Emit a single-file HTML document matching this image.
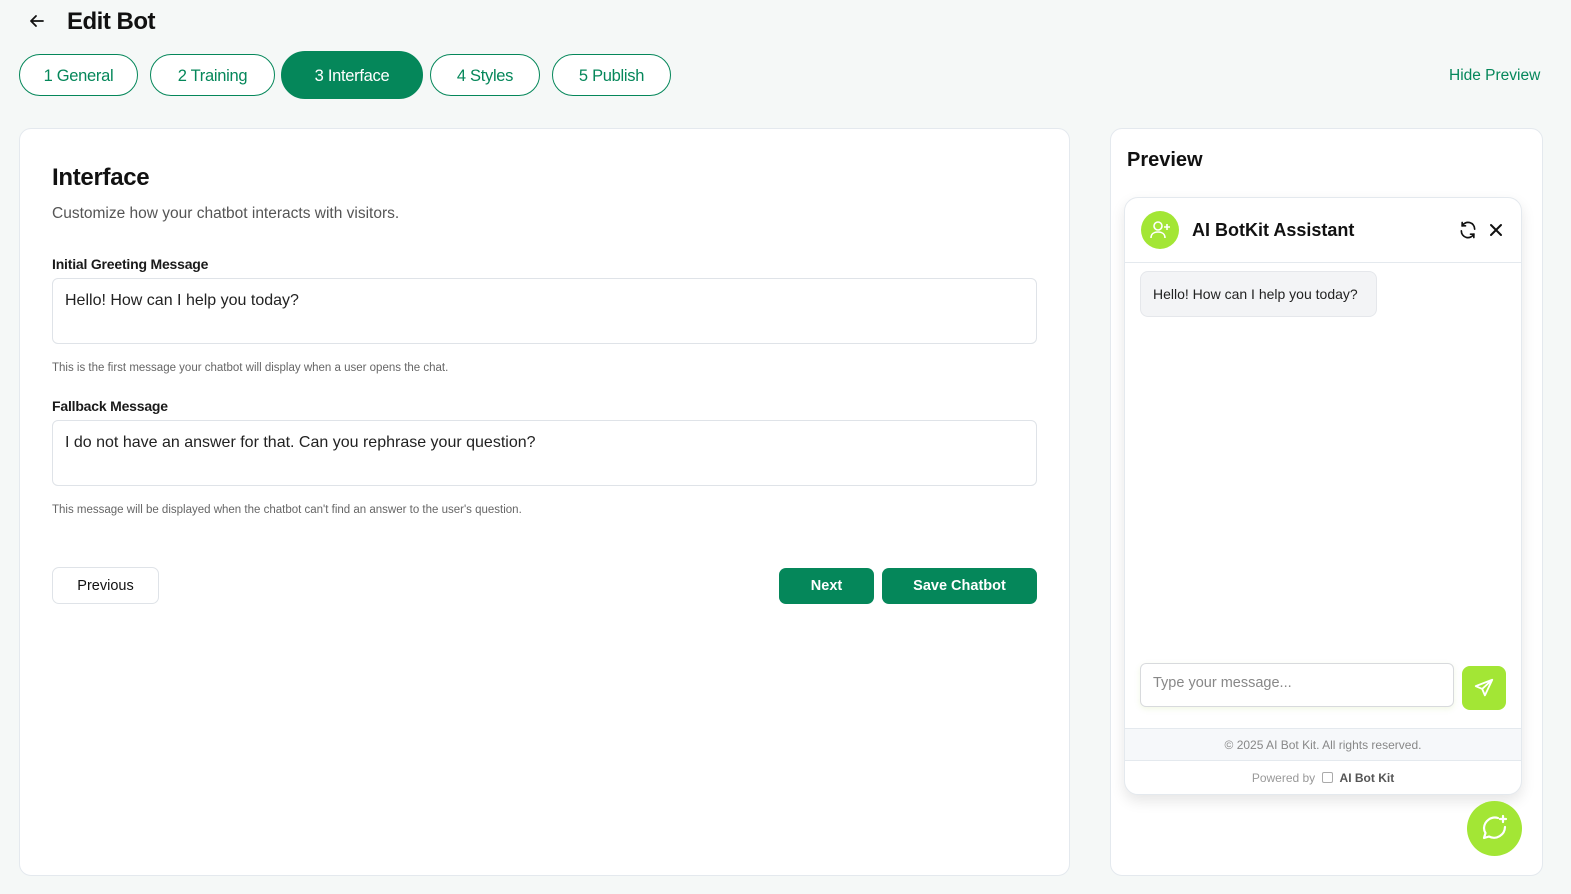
<!DOCTYPE html>
<html><head><meta charset="utf-8"><style>
*{box-sizing:border-box;margin:0;padding:0}
body{width:1571px;height:894px;background:#f5f8f7;font-family:"Liberation Sans",sans-serif;color:#111;position:relative;overflow:hidden}
.a{position:absolute}
.tab{position:absolute;top:54px;height:42px;border:1.5px solid #05875a;border-radius:21px;background:#fff;color:#05875a;font-size:16.5px;display:flex;align-items:center;justify-content:center;letter-spacing:-0.3px;padding-top:2px}
.card{position:absolute;background:#fff;border:1px solid #e4e9ee;border-radius:12px}
.lbl{position:absolute;left:52px;font-size:14px;font-weight:bold;color:#1a1a1a;letter-spacing:-0.2px}
.ta{position:absolute;left:52px;width:985px;height:66px;border:1px solid #dfe3e8;border-radius:6px;font-size:16px;padding:13px 12px;color:#222}
.help{position:absolute;left:52px;font-size:11.5px;color:#666}
.btn{position:absolute;top:568px;height:36px;border-radius:7px;background:#05875a;color:#fff;font-size:14.5px;font-weight:bold;display:flex;align-items:center;justify-content:center}
</style></head><body>
<svg class="a" style="left:28px;top:12px" width="18" height="18" viewBox="0 0 18 18"><path d="M15 9H3M8 4L3 9l5 5" stroke="#111" stroke-width="1.8" fill="none" stroke-linecap="round" stroke-linejoin="round"/></svg>
<div class="a" style="left:67px;top:8px;font-size:24px;font-weight:bold;letter-spacing:-0.5px">Edit Bot</div>
<div class="tab" style="left:19px;width:119px">1 General</div>
<div class="tab" style="left:150px;width:125px">2 Training</div>
<div class="tab" style="left:281px;top:51px;height:48px;border-radius:24px;width:142px;background:#05875a;color:#fff">3 Interface</div>
<div class="tab" style="left:430px;width:110px">4 Styles</div>
<div class="tab" style="left:552px;width:119px">5 Publish</div>
<div class="a" style="left:1449px;top:67px;font-size:15.5px;color:#05875a">Hide Preview</div>

<div class="card" style="left:19px;top:128px;width:1051px;height:748px"></div>
<div class="a" style="left:52px;top:164px;font-size:24px;font-weight:bold;letter-spacing:-0.3px">Interface</div>
<div class="a" style="left:52px;top:205px;font-size:15.5px;color:#555">Customize how your chatbot interacts with visitors.</div>
<div class="lbl" style="top:256px">Initial Greeting Message</div>
<div class="ta" style="top:278px">Hello! How can I help you today?</div>
<div class="help" style="top:362px">This is the first message your chatbot will display when a user opens the chat.</div>
<div class="lbl" style="top:398px">Fallback Message</div>
<div class="ta" style="top:420px">I do not have an answer for that. Can you rephrase your question?</div>
<div class="help" style="top:504px">This message will be displayed when the chatbot can't find an answer to the user's question.</div>
<div class="a" style="left:52px;top:567px;width:107px;height:37px;border:1px solid #dfe3e8;border-radius:7px;font-size:14.5px;display:flex;align-items:center;justify-content:center;background:#fff">Previous</div>
<div class="btn" style="left:779px;width:95px">Next</div>
<div class="btn" style="left:882px;width:155px">Save Chatbot</div>

<div class="card" style="left:1110px;top:128px;width:433px;height:748px"></div>
<div class="a" style="left:1127px;top:149px;font-size:20px;font-weight:bold">Preview</div>
<div class="a" style="left:1124px;top:197px;width:398px;height:598px;background:#fff;border:1px solid #e4e9ee;border-radius:14px;box-shadow:0 6px 14px rgba(0,0,0,0.1);overflow:hidden">
 <div class="a" style="left:16px;top:13px;width:38px;height:38px;border-radius:50%;background:#a3e635"></div>
 <svg class="a" style="left:25px;top:22px" width="22" height="20" viewBox="0 0 22 20"><circle cx="8" cy="6" r="4" stroke="#fff" stroke-width="1.6" fill="none"/><path d="M1 18c0-4 3-6 7-6s7 2 7 6" stroke="#fff" stroke-width="1.6" fill="none"/><path d="M17 4v6M14 7h6" stroke="#fff" stroke-width="1.6"/></svg>
 <div class="a" style="left:67px;top:22px;font-size:18px;font-weight:bold">AI BotKit Assistant</div>
 <svg class="a" style="left:333px;top:22px" width="20" height="20" viewBox="0 0 24 24" fill="none" stroke="#111" stroke-width="2" stroke-linecap="round"><path d="M20 11A8 8 0 0 0 5 7M4 13a8 8 0 0 0 15 4"/><path d="M5 3v4h4M19 21v-4h-4"/></svg>
 <svg class="a" style="left:363px;top:24px" width="16" height="16" viewBox="0 0 16 16"><path d="M3 3l10 10M13 3L3 13" stroke="#111" stroke-width="2" stroke-linecap="round"/></svg>
 <div class="a" style="left:0;top:64px;width:100%;border-top:1px solid #e4e9ee"></div>
 <div class="a" style="left:15px;top:73px;width:237px;height:46px;background:#f3f4f6;border:1px solid #e5e7eb;border-radius:8px;font-size:14px;padding:14px 12px;color:#222">Hello! How can I help you today?</div>
 <div class="a" style="left:15px;top:465px;width:314px;height:44px;border:1px solid #d8dadd;border-radius:6px;font-size:14.5px;color:#888;padding:11px 12px;box-shadow:0 2px 6px rgba(160,200,80,0.15)">Type your message...</div>
 <div class="a" style="left:337px;top:468px;width:44px;height:44px;border-radius:8px;background:#a3e635"></div>
 <svg class="a" style="left:348px;top:479px" width="22" height="22" viewBox="0 0 24 24" fill="none" stroke="#fff" stroke-width="2" stroke-linejoin="round"><path d="M21 3L3 10l7 3 3 7z M10 13l11-10"/></svg>
 <div class="a" style="left:0;top:530px;width:100%;height:33px;background:#f6f8fa;border-top:1px solid #e4e9ee;border-bottom:1px solid #e4e9ee;font-size:12px;color:#888;text-align:center;line-height:33px">© 2025 AI Bot Kit. All rights reserved.</div>
 <div class="a" style="left:0;top:573px;width:100%;font-size:12px;color:#999;text-align:center">Powered by &nbsp;<span style="display:inline-block;width:11px;height:11px;border:1px solid #aaa;border-radius:2px;vertical-align:-1px"></span>&nbsp; <b style="color:#555">AI Bot Kit</b></div>
</div>
<div class="a" style="left:1467px;top:801px;width:55px;height:55px;border-radius:50%;background:#a3e635"></div>
<svg class="a" style="left:1480px;top:813px" width="30" height="30" viewBox="0 0 30 30" fill="none" stroke="#fff" stroke-width="2.2" stroke-linecap="round" stroke-linejoin="round"><path d="M18 5A11 11 0 0 0 4 15c0 2 .6 3.6 1.5 5L4 25l5-1.5A11 11 0 0 0 25 14"/><path d="M23 3v6M20 6h6"/></svg>
</body></html>
